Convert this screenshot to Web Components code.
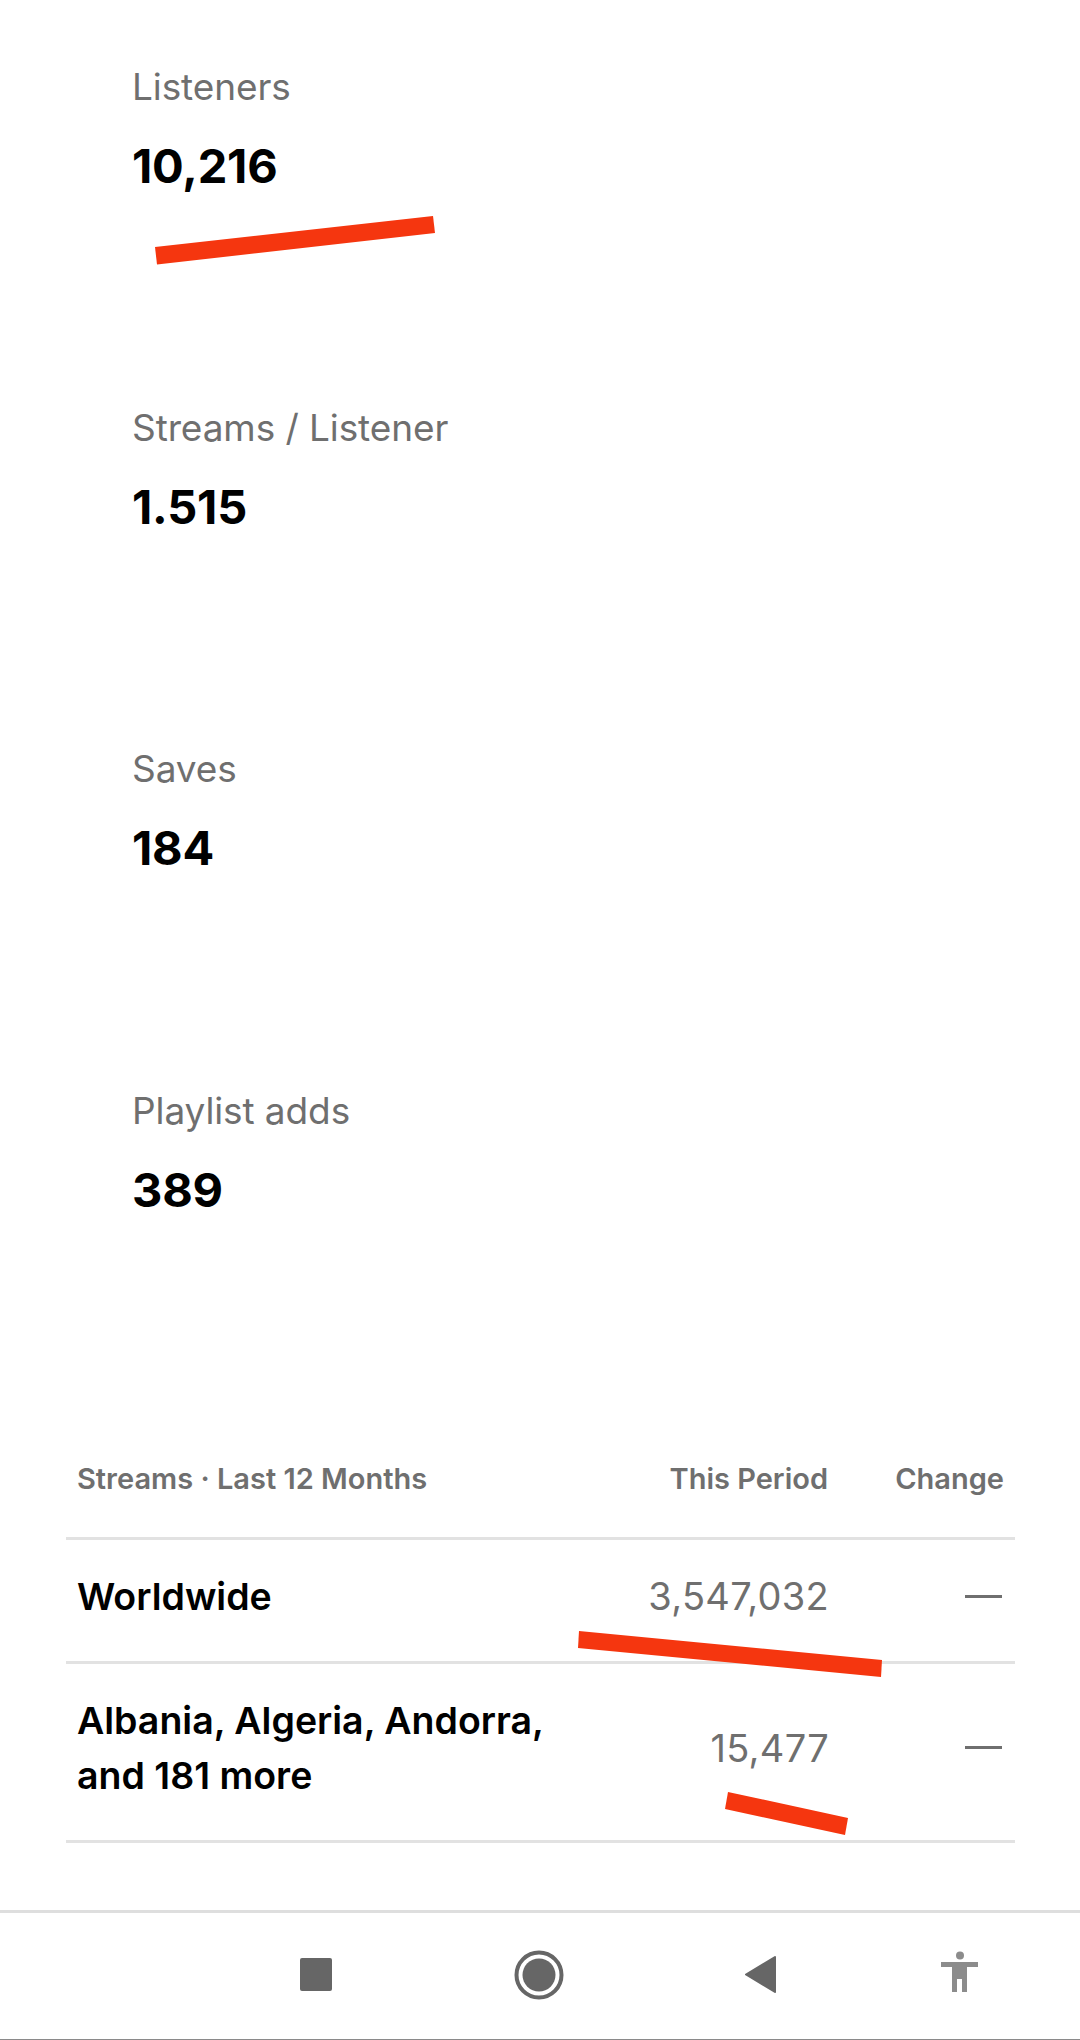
<!DOCTYPE html>
<html>
<head>
<meta charset="utf-8">
<title>Stats</title>
<style>
    html, body{
        margin: 0;
        height: 2040px;
        background: #fff;
        overflow: hidden;
    }
    body{
        position: relative;
        font-family: "Inter", "Liberation Sans", sans-serif;
        display: flex;
        flex-direction: column;
    }
</style>
</head>
<body>
<stat-list>
    <stat-item label="Listeners" value="10,216"></stat-item>
    <stat-item label="Streams / Listener" value="1.515"></stat-item>
    <stat-item label="Saves" value="184"></stat-item>
    <stat-item label="Playlist adds" value="389"></stat-item>
</stat-list>
<streams-table>
    <streams-row name="Worldwide" count="3,547,032"></streams-row>
    <streams-row name="Albania, Algeria, Andorra, and 181 more" count="15,477" tall></streams-row>
</streams-table>
<nav-bar></nav-bar>
<red-marks></red-marks>

<script>
class StatList extends HTMLElement{
    constructor(){
        super();
        this.shadowDom = this.attachShadow({mode: "open"});
        this.shadowDom.innerHTML = `
            <style>
                :host{
                    display: flex;
                    flex-direction: column;
                    padding-top: 65px;
                }
            </style>
            <slot></slot>
        `;
    }
}

class StatItem extends HTMLElement{
    constructor(){
        super();
        this.shadowDom = this.attachShadow({mode: "open"});
    }

    connectedCallback(){
        this.shadowDom.innerHTML = `
            <style>
                :host{
                    display: block;
                    height: 341.2px;
                    padding-left: 132px;
                }
                .label{
                    font: 400 37px/44px "Inter", sans-serif;
                    letter-spacing: -0.1px;
                    color: #6f6f6f;
                }
                .value{
                    margin-top: 29px;
                    font: 700 47px/56px "Inter", sans-serif;
                    letter-spacing: -0.2px;
                    color: #000;
                }
            </style>
            <div class="label">${this.getAttribute("label")}</div>
            <div class="value">${this.getAttribute("value")}</div>
        `;
    }
}

class StreamsTable extends HTMLElement{
    constructor(){
        super();
        this.shadowDom = this.attachShadow({mode: "open"});
        this.shadowDom.innerHTML = `
            <style>
                :host{
                    display: block;
                    margin: 12px 65px 0 66px;
                }
                .head{
                    display: grid;
                    grid-template-columns: 1fr auto 176px;
                    box-sizing: border-box;
                    height: 98px;
                    padding: 19px 11px 0;
                    border-bottom: 3px solid #e2e2e2;
                    font: 600 29px/36px "Inter", sans-serif;
                    color: #6f6f6f;
                }
                .right{
                    text-align: right;
                }
            </style>
            <div class="head">
                <div>Streams · Last 12 Months</div>
                <div class="right">This Period</div>
                <div class="right">Change</div>
            </div>
            <slot></slot>
        `;
    }
}

class StreamsRow extends HTMLElement{
    constructor(){
        super();
        this.shadowDom = this.attachShadow({mode: "open"});
    }

    connectedCallback(){
        this.shadowDom.innerHTML = `
            <style>
                :host{
                    display: grid;
                    grid-template-columns: 1fr auto 176px;
                    align-items: center;
                    box-sizing: border-box;
                    height: ${this.hasAttribute("tall") ? 179 : 124}px;
                    padding: 0 11px 8px;
                    border-bottom: 3px solid #e2e2e2;
                }
                .name{
                    max-width: 490px;
                    font: 600 37.5px/55px "Inter", sans-serif;
                    letter-spacing: 0;
                    color: #000;
                }
                .count{
                    font: 400 38px/44px "Inter", sans-serif;
                    letter-spacing: 0.3px;
                    color: #6f6f6f;
                    text-align: right;
                    margin-right: -1px;
                }
                .dash{
                    justify-self: end;
                    width: 37px;
                    height: 3px;
                    margin-right: 2px;
                    background: #6f6f6f;
                }
            </style>
            <div class="name">${this.getAttribute("name")}</div>
            <div class="count">${this.getAttribute("count")}</div>
            <div class="dash"></div>
        `;
    }
}

class NavBar extends HTMLElement{
    constructor(){
        super();
        this.shadowDom = this.attachShadow({mode: "open"});
        this.shadowDom.innerHTML = `
            <style>
                :host{
                    display: block;
                    position: absolute;
                    left: 0;
                    right: 0;
                    bottom: 0;
                    height: 130px;
                    box-sizing: border-box;
                    border-top: 3px solid #dedede;
                    border-bottom: 1px solid #8a8a8a;
                }
                svg{
                    display: block;
                }
            </style>
            <svg width="1080" height="126" viewBox="0 1913 1080 126">
                <rect x="300" y="1958" width="32" height="33" rx="2" fill="#666"/>
                <circle cx="539" cy="1975" r="22.5" fill="none" stroke="#666" stroke-width="4"/>
                <circle cx="539" cy="1975" r="16.5" fill="#666"/>
                <path d="M775 1957 L746 1974.5 L775 1992 Z" fill="#666" stroke="#666" stroke-width="2" stroke-linejoin="round"/>
                <circle cx="960" cy="1955.5" r="4" fill="#8c8c8c"/>
                <path d="M941 1962 H978 V1967 H967 V1992 H962 V1979 H957 V1992 H952 V1967 H941 Z" fill="#8c8c8c"/>
            </svg>
        `;
    }
}

class RedMarks extends HTMLElement{
    constructor(){
        super();
        this.shadowDom = this.attachShadow({mode: "open"});
        this.shadowDom.innerHTML = `
            <style>
                :host{
                    position: absolute;
                    inset: 0;
                    pointer-events: none;
                }
            </style>
            <svg width="1080" height="2040" viewBox="0 0 1080 2040">
                <polygon points="155,247 433,216 435,233 157,264.5" fill="#f5360f"/>
                <polygon points="579,1631 882,1660 881,1677 578,1648" fill="#f5360f"/>
                <polygon points="728,1792 848,1818 845,1835 725,1809" fill="#f5360f"/>
            </svg>
        `;
    }
}

customElements.define("stat-list", StatList);
customElements.define("stat-item", StatItem);
customElements.define("streams-table", StreamsTable);
customElements.define("streams-row", StreamsRow);
customElements.define("nav-bar", NavBar);
customElements.define("red-marks", RedMarks);
</script>
</body>
</html>
